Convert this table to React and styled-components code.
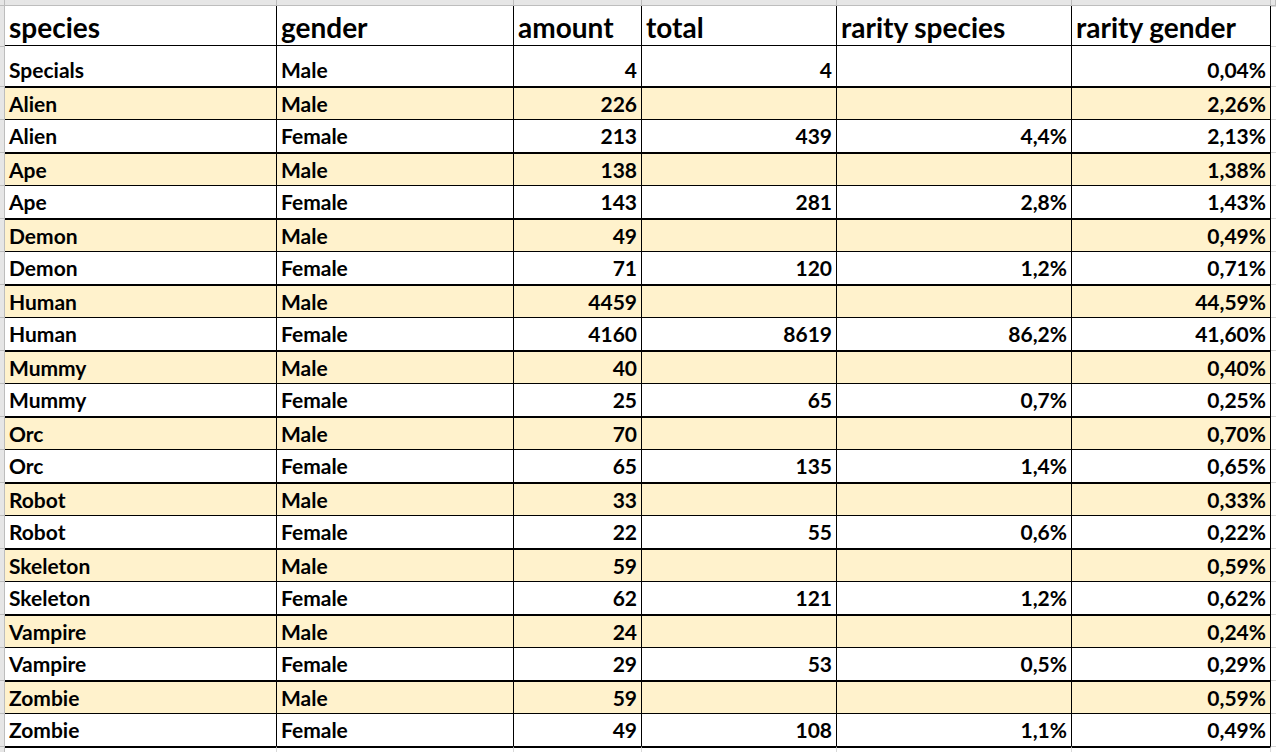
import React from 'react';
import styled, { createGlobalStyle } from 'styled-components';

const GlobalStyle = createGlobalStyle`
  html, body {
    margin: 0;
    padding: 0;
    background: #ffffff;
  }
  body {
    font-family: Lato, "Open Sans", "Liberation Sans", sans-serif;
    color: #000000;
    overflow: hidden;
  }
`;

const COLUMNS = '5px 272px 237px 128px 195px 235px 199px 1fr';

const Sheet = styled.div`
  width: 1276px;
  height: 752px;
  overflow: hidden;
  background: #ffffff;
`;

const Row = styled.div`
  display: grid;
  grid-template-columns: ${COLUMNS};
  height: ${(p) => p.$height}px;
`;

const Gutter = styled.div`
  box-sizing: border-box;
  background: #e6e6e6;
  border-right: 1px solid #bdbdbd;
  border-top: ${(p) => (p.$first ? 'none' : '1px solid #bdbdbd')};
`;

const ColHead = styled.div`
  box-sizing: border-box;
  background: #e6e6e6;
  border-right: 1px solid #bdbdbd;
  border-bottom: 1px solid #bdbdbd;
`;

const Filler = styled.div`
  box-sizing: border-box;
  background: #ffffff;
  border-top: 1px solid #d9d9d9;
`;

const Cell = styled.div`
  box-sizing: border-box;
  display: flex;
  align-items: center;
  justify-content: ${(p) => (p.$right ? 'flex-end' : 'flex-start')};
  padding: ${(p) => p.$shift || 0}px 4px 0 4px;
  background: ${(p) => (p.$tan ? '#fff2cc' : '#ffffff')};
  border-right: 1px solid ${(p) => (p.$grid ? '#d9d9d9' : '#000000')};
  border-top: ${(p) => p.$top}px solid #000000;
  font-size: 21px;
  font-weight: 700;
  line-height: 24px;
  white-space: nowrap;
  overflow: hidden;
`;

const HeadCell = styled(Cell)`
  font-size: 28px;
  line-height: 32px;
  border-bottom: 1px solid #000000;
`;

const headers = ['species', 'gender', 'amount', 'total', 'rarity species', 'rarity gender'];

const rows = [
  ['Alien', '226', '', '', '2,26%', '213', '439', '4,4%', '2,13%'],
  ['Ape', '138', '', '', '1,38%', '143', '281', '2,8%', '1,43%'],
  ['Demon', '49', '', '', '0,49%', '71', '120', '1,2%', '0,71%'],
  ['Human', '4459', '', '', '44,59%', '4160', '8619', '86,2%', '41,60%'],
  ['Mummy', '40', '', '', '0,40%', '25', '65', '0,7%', '0,25%'],
  ['Orc', '70', '', '', '0,70%', '65', '135', '1,4%', '0,65%'],
  ['Robot', '33', '', '', '0,33%', '22', '55', '0,6%', '0,22%'],
  ['Skeleton', '59', '', '', '0,59%', '62', '121', '1,2%', '0,62%'],
  ['Vampire', '24', '', '', '0,24%', '29', '53', '0,5%', '0,29%'],
  ['Zombie', '59', '', '', '0,59%', '49', '108', '1,1%', '0,49%'],
];

const DataRow = ({ cells, tan, top, height, shift }) => (
  <Row $height={height}>
    <Gutter />
    {cells.map((text, i) => (
      <Cell key={i} $right={i > 1} $tan={tan} $top={top} $shift={shift}>
        {text}
      </Cell>
    ))}
    <Filler />
  </Row>
);

const App = () => {
  const lines = [];
  rows.forEach(([species, mAmount, mTotal, mRarity, mGender, fAmount, fTotal, fRarity, fGender]) => {
    lines.push({
      key: species + '-m',
      cells: [species, 'Male', mAmount, mTotal, mRarity, mGender],
      tan: true,
      top: 2,
    });
    lines.push({
      key: species + '-f',
      cells: [species, 'Female', fAmount, fTotal, fRarity, fGender],
      tan: false,
      top: 1,
    });
  });

  return (
    <Sheet>
      <GlobalStyle />
      <Row $height={6}>
        <ColHead />
        {headers.map((h) => (
          <ColHead key={h} />
        ))}
        <ColHead />
      </Row>
      <Row $height={40}>
        <Gutter $first />
        {headers.map((h) => (
          <HeadCell key={h} $top={0} $shift={2}>
            {h}
          </HeadCell>
        ))}
        <Filler />
      </Row>
      <DataRow cells={['Specials', 'Male', '4', '4', '', '0,04%']} top={0} height={40} shift={8} />
      {lines.map((l) => (
        <DataRow key={l.key} cells={l.cells} tan={l.tan} top={l.top} height={33} shift={0} />
      ))}
      <Row $height={6}>
        <Gutter />
        {headers.map((h) => (
          <Cell key={h} $top={2} $grid />
        ))}
        <Filler />
      </Row>
    </Sheet>
  );
};

export default App;
